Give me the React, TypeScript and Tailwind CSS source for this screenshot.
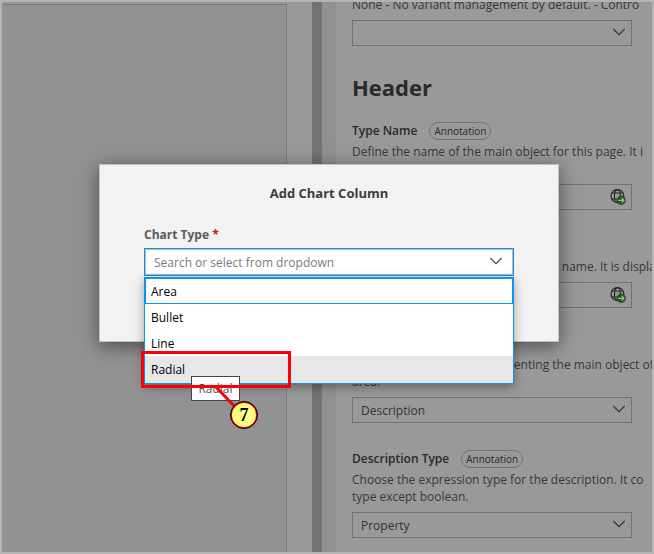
import type { ReactNode } from "react";

function Chevron({ className }: { className: string }) {
  return (
    <svg
      className={`pointer-events-none absolute h-3 w-3 ${className}`}
      viewBox="0 0 12 12"
      fill="none"
      stroke="currentColor"
      strokeWidth="1.2"
    >
      <path d="M0.3 3 L6 8.6 L11.7 3" />
    </svg>
  );
}

function GlobeGo() {
  return (
    <svg className="block h-4 w-4" viewBox="0 0 16 16" fill="none">
      <g stroke="#222" strokeWidth="1.1">
        <circle cx="7.4" cy="7" r="6.4" />
        <ellipse cx="7.4" cy="7" rx="3" ry="6.4" />
        <path d="M1.8 4h11.2M1.4 10h7" />
      </g>
      <circle cx="11.2" cy="11.3" r="4.7" fill="#1f5a1b" />
      <path d="M8.2 11.3h5.6M11.6 9l2.3 2.3-2.3 2.3" stroke="#a8b8a6" strokeWidth="1.2" />
    </svg>
  );
}

function SelectBox({ id, value }: { id: string; value: string }) {
  return (
    <div className="relative mt-[7px] w-[280px] text-[#333]">
      <select
        id={id}
        aria-label={id}
        defaultValue={value}
        className="block h-[26px] w-full appearance-none border border-[#737373] bg-transparent px-2 pt-px text-[12px] leading-6 text-[#333]"
      >
        <option>{value}</option>
      </select>
      <Chevron className="right-[7px] top-[6px]" />
    </div>
  );
}

function TextBox({ id }: { id: string }) {
  return (
    <div className="mt-[7px] flex h-[26px] w-[280px] items-center border border-[#737373] pr-[5px]">
      <input id={id} className="h-full min-w-0 flex-1 bg-transparent px-2 text-[12px] outline-none" />
      <button type="button" aria-label="Translate">
        <GlobeGo />
      </button>
    </div>
  );
}

function Field({
  id,
  label,
  lines,
  children,
}: {
  id: string;
  label: string;
  lines: string[];
  children: ReactNode;
}) {
  return (
    <div>
      <div className="flex h-[18px] items-center gap-3">
        <label htmlFor={id} className="whitespace-nowrap text-[12px] font-semibold text-[#2a2a2a]">
          {label}
        </label>
        <span className="flex h-[18px] items-center rounded-full border border-[#737373] px-1 text-[10px] text-[#2a2a2a]">
          Annotation
        </span>
      </div>
      <div className="mt-[3px] whitespace-nowrap text-[12px] leading-[17px] text-[#383838]">
        {lines.map((line) => (
          <p key={line}>{line}</p>
        ))}
      </div>
      {children}
    </div>
  );
}

const chartTypes = ["Area", "Bullet", "Line", "Radial"];

const optionStyles: Record<string, string> = {
  Area: "h-[27px] border-2 border-b border-[#0a94ee] pl-[5px] pt-px",
  Bullet: "h-[26px] border-x border-[#0a94ee] pl-[6px] pt-px",
  Line: "h-[26px] border-x border-[#0a94ee] pl-[6px] pt-px",
  Radial: "h-[28px] border-x border-b border-[#0a94ee] bg-[#e7e7e7] pl-[6px]",
};

export default function App() {
  return (
    <div className="relative flex h-screen overflow-hidden border-2 border-[#b4b4b4] bg-[#999] font-['Open_Sans','Noto_Sans',sans-serif]">
      <div className="mt-[2px] min-w-0 flex-1 border-r border-t border-[#7b7b7b] bg-[#929292]" />
      <div className="w-[25px] shrink-0" />
      <div className="w-[10px] shrink-0 bg-[#737373]" />
      <div className="w-[14px] shrink-0 bg-[#919191]" />

      <main className="w-[316px] shrink-0 overflow-hidden pl-4">
        <div className="-mt-[6px]">
          <p className="whitespace-nowrap text-[12px] leading-[17px] text-[#383838]">
            None - No variant management by default. - Contro
          </p>
          <SelectBox id="variant" value="" />
        </div>

        <h2 className="mb-[19px] mt-[25px] text-[22px] font-bold leading-8 text-[#2a2a2a]">Header</h2>

        <div className="flex flex-col gap-[27px]">
          <Field
            id="type-name"
            label="Type Name"
            lines={["Define the name of the main object for this page. It i", "s seen on screen."]}
          >
            <TextBox id="type-name" />
          </Field>
          <Field id="title" label="Title" lines={["Define the header title, i.e. the object name. It is displa"]}>
            <TextBox id="title" />
          </Field>
          <Field
            id="description"
            label="Description"
            lines={["Describe the text field representing the main object of", "area."]}
          >
            <SelectBox id="description" value="Description" />
          </Field>
          <Field
            id="description-type"
            label="Description Type"
            lines={["Choose the expression type for the description. It co", "type except boolean."]}
          >
            <SelectBox id="description-type" value="Property" />
          </Field>
        </div>
      </main>

      <div className="absolute inset-0 flex items-start justify-center pl-1 pt-[162px]">
        <div
          role="dialog"
          aria-labelledby="dialog-title"
          className="relative h-[178px] w-[460px] border border-[#c2c2c2] bg-[#f2f2f2] px-11 pt-[18px] shadow-[0_4px_18px_rgba(0,0,0,0.5)]"
        >
          <h1 id="dialog-title" className="text-center text-[13px] font-bold leading-5 text-[#3c3c3c]">
            Add Chart Column
          </h1>
          <label htmlFor="chart-type" className="mt-[22px] block text-[12px] font-bold leading-5 text-[#5c5c5c]">
            Chart Type <span className="text-[#bb1a10]">*</span>
          </label>
          <div className="relative mt-[3px] border border-[#0a94ee] text-[#444]">
            <input
              id="chart-type"
              role="combobox"
              aria-expanded="true"
              aria-controls="chart-type-list"
              placeholder="Search or select from dropdown"
              className="block h-[26px] w-full border border-[#bcb8b4] bg-white px-2 text-[12px] outline-none placeholder:text-[#7a7a7a]"
            />
            <Chevron className="right-[11px] top-[6px]" />
            <ul
              id="chart-type-list"
              role="listbox"
              className="absolute -left-px -right-px top-[28px] bg-white text-[12px] text-black shadow-[0_3px_10px_rgba(0,0,0,0.35)]"
            >
              {chartTypes.map((type) => (
                <li
                  key={type}
                  role="option"
                  aria-selected={type === "Radial"}
                  className={`flex items-center ${optionStyles[type]}`}
                >
                  {type}
                </li>
              ))}
            </ul>

            <div
              role="tooltip"
              className="absolute left-[46px] top-[127px] flex h-[25px] w-[49px] items-center justify-center border border-[#444] bg-white text-[12px] text-[#555]"
            >
              Radial
            </div>
            <div className="absolute -left-1 top-[102px] h-[37px] w-[150px] border-[3px] border-[#fb0007]" />
            <svg className="absolute left-[66px] top-[132px] h-10 w-10" viewBox="0 0 40 40">
              <path d="M5 6 L26 28" stroke="#fb0007" strokeWidth="3" />
            </svg>
            <span className="absolute left-[85px] top-[152px] flex h-7 w-7 items-center justify-center rounded-full border border-black bg-[#fb0007] p-px">
              <span className="flex h-full w-full items-center justify-center rounded-full bg-[#ffff80] font-['Liberation_Serif',serif] text-[18px] font-bold text-black">
                7
              </span>
            </span>
          </div>
        </div>
      </div>
    </div>
  );
}
